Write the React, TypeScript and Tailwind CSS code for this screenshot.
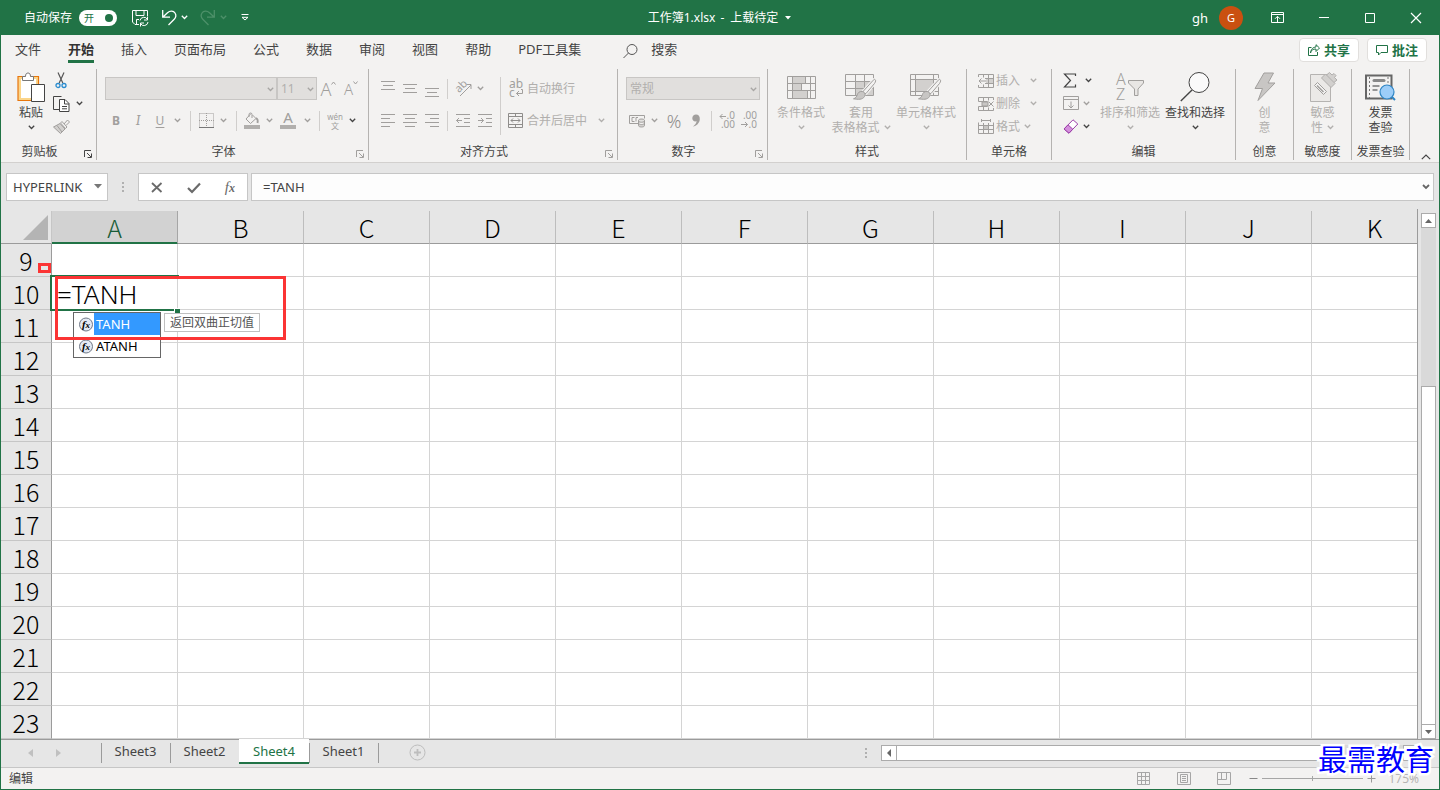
import React from "react";

type IconProps = {
  w: number;
  h: number;
  className?: string;
  children: React.ReactNode;
};

const Icon = ({ w, h, className, children }: IconProps) => (
  <svg
    width={w}
    height={h}
    viewBox={`0 0 ${w} ${h}`}
    fill="none"
    stroke="currentColor"
    className={`shrink-0 overflow-visible ${className ?? ""}`}
    aria-hidden="true"
  >
    {children}
  </svg>
);

const Chevron = ({ className }: { className?: string }) => (
  <Icon w={7} h={5} className={className}>
    <path d="M0.8 0.8 3.5 3.5 6.2 0.8" strokeWidth="1.3" />
  </Icon>
);

const Launcher = ({ className }: { className?: string }) => (
  <button aria-label="更多" className={`absolute right-1 bottom-0.5 ${className}`}>
    <Icon w={8} h={8}>
      <path d="M0.5 7V0.5H7M3 3l4 4M7.5 3.5v4h-4" />
    </Icon>
  </button>
);

const Sep = ({ className }: { className?: string }) => (
  <span className={`h-5 w-px shrink-0 bg-[#d0cecc] ${className}`} />
);

/* ---------- ribbon building blocks ---------- */

type GroupProps = {
  name: string;
  width: string;
  launcher?: string;
  children: React.ReactNode;
};

const Group = ({ name, width, launcher, children }: GroupProps) => (
  <section
    className={`relative flex h-[91px] shrink-0 flex-col border-r border-[#b5b3b1] ${width}`}
  >
    <div className="h-[75px]">{children}</div>
    <h3 className="text-center leading-4 whitespace-nowrap text-[#444]">
      {name}
    </h3>
    {launcher && <Launcher className={launcher} />}
  </section>
);

type BigButtonProps = {
  icon: React.ReactNode;
  lines: string[];
  arrow?: "below" | "inline";
  className?: string;
};

const BigButton = ({ icon, lines, arrow, className }: BigButtonProps) => (
  <button className={`flex flex-col items-center whitespace-nowrap ${className}`}>
    <span className="flex h-9 items-center justify-center">{icon}</span>
    {lines.map((line, i) => (
      <span key={line} className="flex h-[15px] items-center leading-[15px]">
        {line}
        {arrow === "inline" && i === lines.length - 1 && (
          <Chevron className="ml-1" />
        )}
      </span>
    ))}
    {arrow === "below" && (
      <span className="flex h-[15px] items-center">
        <Chevron />
      </span>
    )}
  </button>
);

const Tool = ({
  label,
  className,
  children,
}: {
  label: string;
  className: string;
  children: React.ReactNode;
}) => (
  <button
    aria-label={label}
    className={`flex h-[23px] shrink-0 items-center justify-center ${className}`}
  >
    {children}
  </button>
);

const Lines = ({ d }: { d: string }) => (
  <Icon w={16} h={18}>
    <path d={d} />
  </Icon>
);

const Combo = ({
  label,
  value,
  className,
}: {
  label: string;
  value: string;
  className: string;
}) => (
  <span className={`relative flex h-[23px] ${className}`}>
    <select
      aria-label={label}
      disabled
      className="w-full appearance-none border border-[#c8c6c4] bg-[#e1dfdd] px-[3px] text-[#b1afad] opacity-100"
    >
      <option>{value}</option>
    </select>
    <Chevron className="absolute top-[10px] right-[3px] text-[#a8a6a4]" />
  </span>
);

/* ---------- title bar ---------- */

const TitleBar = () => (
  <header className="flex h-[35px] shrink-0 items-center bg-[#217346] text-white">
    <div className="flex flex-1 items-center pl-6">
      <label htmlFor="autosave">自动保存</label>
      <span className="relative ml-[7px] flex h-4 w-[38px]">
        <input
          id="autosave"
          type="checkbox"
          defaultChecked
          className="h-4 w-[38px] appearance-none rounded-full bg-white"
        />
        <span className="pointer-events-none absolute top-0 left-[5px] text-[10px] leading-4 text-[#217346]">
          开
        </span>
        <span className="pointer-events-none absolute top-1 right-1 h-2 w-2 rounded-full bg-[#217346]" />
      </span>
      <button aria-label="保存" className="ml-[15px]">
        <Icon w={17} h={18}>
          <path d="M7 15.5H3L.5 13V1.500H15.500V7M4 1.500V6.500H12V1.500M4.500 15V10.500H7" />
          <path d="M8 11.500a4 4 0 0 1 7.500-1M15.500 7.500v3.500H12M16 13a4 4 0 0 1-7.500 1.500M8.500 17.500V14H12" />
        </Icon>
      </button>
      <button aria-label="撤消" className="ml-[13px]">
        <Icon w={15} h={17}>
          <path
            d="M0.700 1v7.200H8M1 8 5.500 3.700C8 1.400 11.500 1.500 13 4c1.500 2.400.8 4.600-.8 6.200L6.500 16"
            strokeWidth="1.300"
          />
        </Icon>
      </button>
      <button aria-label="撤消列表" className="ml-[4px]">
        <Chevron />
      </button>
      <button aria-label="恢复" className="ml-3 text-[#4d9069]">
        <Icon w={15} h={17}>
          <path
            d="M14.300 1v7.200H7M14 8 9.500 3.700C7 1.400 3.500 1.500 2 4 .5 6.400 1.200 8.600 2.800 10.200L8.500 16"
            strokeWidth="1.300"
          />
        </Icon>
      </button>
      <button aria-label="恢复列表" className="ml-[5px] text-[#4d9069]">
        <Chevron />
      </button>
      <button aria-label="自定义快速访问工具栏" className="ml-[14px]">
        <Icon w={8} h={7}>
          <path d="M0.500 0.500h7" />
          <path d="M1 3.300h6L4 6z" />
        </Icon>
      </button>
    </div>
    <h1 className="flex items-center gap-[5px]">
      <span>工作簿1.xlsx</span>
      <span>-</span>
      <span className="pl-px">上载待定</span>
      <svg width="6" height="4" className="ml-0.5" aria-hidden="true">
        <path d="M0 0h6L3 3.500z" fill="currentColor" />
      </svg>
    </h1>
    <div className="flex flex-1 items-center justify-end pr-[19px] pl-1.5">
      <span className="text-[13px]">gh</span>
      <span className="ml-[11px] flex h-6 w-6 items-center justify-center rounded-full bg-[#ca5010] text-[11px]">
        G
      </span>
      <button aria-label="功能区显示选项" className="ml-7">
        <Icon w={13} h={11}>
          <path d="M.5.5h12v10H.5zM.5 2.500h12M6.500 10V4.500M4 6.800l2.500-2.500L9 6.800" />
        </Icon>
      </button>
      <button aria-label="最小化" className="ml-[35px]">
        <Icon w={10} h={11}>
          <path d="M0 5.500h10" />
        </Icon>
      </button>
      <button aria-label="最大化" className="ml-9">
        <Icon w={10} h={10}>
          <path d="M.5.5h9v9h-9z" />
        </Icon>
      </button>
      <button aria-label="关闭" className="ml-9">
        <Icon w={10} h={10}>
          <path d="m0 0 10 10M10 0 0 10" strokeWidth="1.200" />
        </Icon>
      </button>
    </div>
  </header>
);

/* ---------- ribbon tabs ---------- */

const tabs = [
  "文件",
  "开始",
  "插入",
  "页面布局",
  "公式",
  "数据",
  "审阅",
  "视图",
  "帮助",
  "PDF工具集",
];

const RibbonTabs = () => (
  <nav className="flex h-8 shrink-0 items-start pr-3 pl-[14px] text-[13px] text-[#444]">
    <div className="flex gap-[27px]">
      {tabs.map((tab) => (
        <button
          key={tab}
          className={
            tab === "开始"
              ? "h-7 border-b-[3px] border-[#217346] pt-0.5 font-bold whitespace-nowrap text-[#333]"
              : "h-7 border-b-[3px] border-transparent pt-0.5 whitespace-nowrap"
          }
        >
          {tab}
        </button>
      ))}
    </div>
    <button className="ml-[42px] flex h-7 items-center gap-[13px]">
      <Icon w={15} h={15} className="mt-1 text-[#555]">
        <circle cx="9" cy="5.500" r="5" />
        <path d="M5.500 9 .5 14" />
      </Icon>
      搜索
    </button>
    <div className="ml-auto flex gap-2 pt-[3px] font-bold text-[#217346]">
      <button className="flex h-6 w-[60px] items-center justify-center gap-1 rounded-sm border border-[#e1dfdd] bg-white">
        <Icon w={12} h={12}>
          <path d="M3.500 3.500h-3v8h9V8M2.500 9C3 6 5 5 8 5V7.500L11.500 4 8 .7V3C5 3.200 3 5 2.500 9z" />
        </Icon>
        共享
      </button>
      <button className="flex h-6 w-[60px] items-center justify-center gap-1 rounded-sm border border-[#e1dfdd] bg-white">
        <Icon w={12} h={12}>
          <path d="M.5 1.500h11v7H5L2.500 11V8.500h-2z" />
        </Icon>
        批注
      </button>
    </div>
  </nav>
);

/* ---------- ribbon groups ---------- */

const ClipboardGroup = () => (
  <Group name="剪贴板" width="w-[96px] pr-[18px]" launcher="text-[#444]">
    <div className="flex pl-4">
      <BigButton
        className="w-[30px] text-[#444]"
        lines={["粘贴"]}
        arrow="below"
        icon={
          <Icon w={28} h={31}>
            <path
              d="M2.500 5.500h18v22h-18z"
              fill="#fff"
              stroke="#fbd58a"
              strokeWidth="3"
            />
            <path d="M14 28.500H1v-24H21.500V12" stroke="#e8760c" strokeWidth="1.200" />
            <path
              d="M5.500 8.500V4.500H8.500C8.500 2 9.500 1 11 1s2.500 1 2.500 3.500h3v4z"
              fill="#fff"
              stroke="#777"
            />
            <path d="M14.500 12.500h13v17h-13z" fill="#fff" stroke="#444" />
          </Icon>
        }
      />
      <div className="ml-[7px]">
        <Tool label="剪切" className="w-[18px]">
          <Icon w={12} h={17}>
            <path d="M3 0.500 7.800 11M9 0.500 4.200 11" stroke="#555" strokeWidth="1.200" />
            <circle cx="3" cy="13.500" r="2" stroke="#2b8ccf" strokeWidth="1.300" />
            <circle cx="9" cy="13.500" r="2" stroke="#2b8ccf" strokeWidth="1.300" />
          </Icon>
        </Tool>
        <div className="flex">
          <Tool label="复制" className="w-[18px] text-[#444]">
            <Icon w={17} h={16}>
              <path d="M6 13.500H.5v-13h8" />
              <path d="M6.500 3.500h5.500l4 4v8H6.500z" fill="#fff" />
              <path d="M11.500 3.500v4.500H16M9 10.500h5M9 12.800h5" />
            </Icon>
          </Tool>
          <Tool label="复制选项" className="w-[18px] text-[#444]">
            <Chevron />
          </Tool>
        </div>
        <Tool label="格式刷" className="w-[18px] text-[#a19f9d]">
          <Icon w={17} h={15}>
            <path d="M.5 8 7 4.500l5 5.500-4.500 4.500z" fill="#d2d0ce" />
            <path d="m4 6.500 5 6.500M7.500 4l1.500-1.500 5 5.500-1.500 1.500zM11 5l3.500-4 2 2L13 6.500" />
          </Icon>
        </Tool>
      </div>
    </div>
  </Group>
);

const FontGroup = () => (
  <Group name="字体" width="w-[272px] pr-[18px]" launcher="text-[#a19f9d]">
    <div className="flex w-[270px] flex-col gap-[9px] pt-2 pl-2 text-[#a19f9d]">
      <div className="flex items-center">
        <Combo label="字体名称" value="" className="w-[172px]" />
        <Combo label="字号" value="11" className="w-[40px]" />
        <Tool label="增大字号" className="w-[23px] text-[18px] font-light">
          A
          <Icon w={5} h={4} className="-mt-3">
            <path d="M.5 3.500 2.500 1l2 2.500" />
          </Icon>
        </Tool>
        <Tool label="减小字号" className="w-[22px] text-[15px] font-light">
          A
          <Icon w={5} h={4} className="-mt-3">
            <path d="M.5.5 2.500 3l2-2.500" />
          </Icon>
        </Tool>
      </div>
      <div className="flex items-center">
        <Tool label="加粗" className="w-[22px] font-bold">B</Tool>
        <Tool label="倾斜" className="w-[22px] font-serif text-[14px] italic">
          I
        </Tool>
        <Tool label="下划线" className="w-[22px] underline underline-offset-2">
          U
        </Tool>
        <Tool label="下划线样式" className="w-3"><Chevron /></Tool>
        <Sep className="mx-[7px]" />
        <Tool label="边框" className="w-4">
          <Icon w={15} h={15}>
            <path d="M.5.500h14v14M.5.500v14M7.500 0v15M0 7.500h15" strokeDasharray="1 1" />
            <path d="M0 14.500h15" stroke="#777" />
          </Icon>
        </Tool>
        <Tool label="边框样式" className="w-[18px]"><Chevron /></Tool>
        <Sep className="mx-1" />
        <Tool label="填充颜色" className="w-[22px]">
          <Icon w={16} h={17}>
            <path d="M7 1.500 2 7l4.500 4.500L12 6.500 8.500 3M5 5V2.500A1.500 1.500 0 0 1 8 2.500V6" />
            <path d="M12 6c2 1 2 3 1.500 5" strokeWidth="1.800" />
            <path d="M0 15h16" stroke="#b1afad" strokeWidth="4" />
          </Icon>
        </Tool>
        <Tool label="填充颜色列表" className="w-3"><Chevron /></Tool>
        <Tool label="字体颜色" className="w-[26px]">
          <Icon w={16} h={17}>
            <text x="8" y="11" textAnchor="middle" fontSize="15" fill="currentColor" stroke="none">
              A
            </text>
            <path d="M0 15h16" stroke="#b1afad" strokeWidth="4" />
          </Icon>
        </Tool>
        <Tool label="字体颜色列表" className="w-3"><Chevron /></Tool>
        <Sep className="mx-[6px]" />
        <Tool label="拼音" className="w-[18px] flex-col text-[8px] leading-[9px]">
          <span>wén</span>
          <span>文</span>
        </Tool>
        <Tool label="拼音选项" className="w-4 text-[#444]"><Chevron /></Tool>
      </div>
    </div>
  </Group>
);

const AlignGroup = () => (
  <Group name="对齐方式" width="w-[249px] pr-[18px]" launcher="text-[#a19f9d]">
    <div className="flex w-[246px] items-start pt-2 pl-2 text-[#a19f9d]">
      <div className="flex flex-col gap-[9px]">
        <div className="flex items-center">
          <Tool label="顶端对齐" className="w-[22px]">
            <Lines d="M1 1.500h14M3 5.500h10M1 9.500h14" />
          </Tool>
          <Tool label="垂直居中" className="w-[22px]">
            <Lines d="M1 4.500h14M3 8.500h10M1 12.500h14" />
          </Tool>
          <Tool label="底端对齐" className="w-[22px]">
            <Lines d="M1 8.500h14M3 12.500h10M1 16.500h14" />
          </Tool>
          <Sep className="mx-1" />
          <Tool label="方向" className="w-[22px]">
            <Icon w={18} h={17}>
              <text
                x="2"
                y="12"
                fontSize="11"
                fill="currentColor"
                stroke="none"
                transform="rotate(-45 5 9)"
              >
                ab
              </text>
              <path d="M6 16 17 5M12.500 4.500h4.500V9" />
            </Icon>
          </Tool>
          <Tool label="方向选项" className="w-3"><Chevron /></Tool>
        </div>
        <div className="flex items-center">
          <Tool label="左对齐" className="w-[22px]">
            <Lines d="M1 2.500h14M1 6.500h9M1 10.500h14M1 14.500h9" />
          </Tool>
          <Tool label="居中" className="w-[22px]">
            <Lines d="M1 2.500h14M3 6.500h10M1 10.500h14M3 14.500h10" />
          </Tool>
          <Tool label="右对齐" className="w-[22px]">
            <Lines d="M1 2.500h14M6 6.500h9M1 10.500h14M6 14.500h9" />
          </Tool>
          <Sep className="mx-1" />
          <Tool label="减少缩进量" className="w-[22px]">
            <Lines d="M1 2.500h14M9 6.500h6M9 10.500h6M1 14.500h14M1.500 8.500H7M4 6 1.500 8.500 4 11" />
          </Tool>
          <Tool label="增加缩进量" className="w-[22px]">
            <Lines d="M1 2.500h14M9 6.500h6M9 10.500h6M1 14.500h14M1 8.500h5.500M4 6l2.500 2.500L4 11" />
          </Tool>
        </div>
      </div>
      <span className="mx-1 h-[58px] w-px bg-[#d0cecc]" />
      <div className="flex flex-col gap-[9px] pl-[3px] text-[#b1afad]">
        <button className="flex h-[23px] items-center gap-[3px]">
          <Icon w={16} h={19} className="text-[#a19f9d]">
            <text x="1" y="9" fontSize="12" fill="currentColor" stroke="none">
              ab
            </text>
            <text x="1" y="18" fontSize="12" fill="currentColor" stroke="none">
              c
            </text>
            <path d="M13 10.500h1.500v4H8.500M11 12l-2.500 2.500L11 17" />
          </Icon>
          自动换行
        </button>
        <button className="flex h-[23px] items-center gap-[3px]">
          <Icon w={16} h={16} className="text-[#8f8d8b]">
            <path d="M.5.5h14v14H.5zM.5 3.500h14M.5 11.500h14M7.500.5v3M7.500 11.500v3" />
            <path d="M3 7.500h9M5 5.500l-2 2 2 2M10 5.500l2 2-2 2" />
          </Icon>
          合并后居中
          <Chevron className="ml-2" />
        </button>
      </div>
    </div>
  </Group>
);

const NumberGroup = () => (
  <Group name="数字" width="w-[150px] pr-[18px]" launcher="text-[#a19f9d]">
    <div className="flex w-[146px] flex-col gap-[9px] pt-2 pl-2 text-[#a19f9d]">
      <Combo label="数字格式" value="常规" className="w-[134px]" />
      <div className="flex items-center">
        <Tool label="会计数字格式" className="w-[22px]">
          <Icon w={17} h={14}>
            <path d="M9 9.500H.5v-8h15v3M5.500 3.500H3v4h2.500M7 7.500v-4h2" />
            <path d="M9.500 6.500c0-2 6-2 6 0v5c0 2-6 2-6 0zM9.500 6.500c0 2 6 2 6 0M9.500 9c0 2 6 2 6 0" fill="#d2d0ce" />
          </Icon>
        </Tool>
        <Tool label="货币列表" className="w-3"><Chevron /></Tool>
        <Tool label="百分比样式" className="w-7 text-[18px] font-light text-[#8f8d8b]">%</Tool>
        <Tool label="千位分隔样式" className="w-4">
          <Icon w={8} h={13}>
            <path
              d="M4 .5C6.500.5 8 2.500 7.800 5.200 7.500 9 4.500 12 1 12.500 3 11 4.500 9 4.600 7.300 2 8 .3 6.300.3 4.200.3 2 2 .5 4 .5z"
              fill="currentColor"
              stroke="none"
            />
          </Icon>
        </Tool>
        <Sep className="mx-[7px]" />
        <Tool label="增加小数位数" className="w-4">
          <Icon w={17} h={17}>
            <text x="16" y="7" textAnchor="end" fontSize="10" fill="currentColor" stroke="none">
              .0
            </text>
            <text x="16" y="16" textAnchor="end" fontSize="10" fill="currentColor" stroke="none">
              .00
            </text>
            <path d="M7 4.500H1M3.500 2 1 4.500 3.500 7" />
          </Icon>
        </Tool>
        <Tool label="减少小数位数" className="ml-1.5 w-4">
          <Icon w={17} h={17}>
            <text x="16" y="7" textAnchor="end" fontSize="10" fill="currentColor" stroke="none">
              .00
            </text>
            <text x="16" y="16" textAnchor="end" fontSize="10" fill="currentColor" stroke="none">
              .0
            </text>
            <path d="M0 12.500h6.500M4 10l2.500 2.500L4 15" />
          </Icon>
        </Tool>
      </div>
    </div>
  </Group>
);

const Brush = () => (
  <>
    <path
      d="M30 6.500c1 .8.800 2-.5 4l-8.500 10c-1 1-3.500-.8-2.800-2.200L28 7.500c.8-1 1.400-1.400 2-1z"
      fill="#f3f2f1"
      stroke="#f3f2f1"
      strokeWidth="3"
    />
    <path
      d="M30 6.500c1 .8.800 2-.5 4l-8.500 10c-1 1-3.500-.8-2.800-2.200L28 7.500c.8-1 1.400-1.400 2-1z"
      fill="#f3f2f1"
    />
    <path
      d="M17 18.500c2.500.2 4 2.500 2.500 5C17.500 27 13 26.500 8.500 25.800c2.500-.8 3-2 3.800-4C13 19.500 14.500 18.300 17 18.500z"
      fill="#c8c6c4"
    />
  </>
);

const StylesGroup = () => (
  <Group name="样式" width="w-[199px]">
    <div className="flex gap-[5px] pl-2 text-[#b1afad]">
      <BigButton
        className="w-[50px]"
        lines={["条件格式"]}
        arrow="below"
        icon={
          <Icon w={29} h={23} className="text-[#a19f9d]">
            <path d="M6 1h13v6H6zM6 8h9v6H6zM6 15h14v7H6z" fill="#d2d0ce" stroke="none" />
            <path d="M.5.5h28v22H.5zM.5 7.500h28M.5 14.500h28M5.500.5v22M18.500.5v7M14.500 7.500v7M20.500 14.500v8M23.500.5v22" />
          </Icon>
        }
      />
      <BigButton
        className="w-[60px]"
        lines={["套用", "表格格式"]}
        arrow="inline"
        icon={
          <Icon w={32} h={28} className="text-[#a19f9d]">
            <path d="M10 9h18v13H10z" fill="#d2d0ce" stroke="none" />
            <path d="M.5 1.500h28v21H.5zM.5 8.500h28M.5 15.500h28M10.500 1.500v21M19.500 1.500v21" />
            <Brush />
          </Icon>
        }
      />
      <BigButton
        className="w-[60px]"
        lines={["单元格样式"]}
        arrow="below"
        icon={
          <Icon w={32} h={28} className="text-[#a19f9d]">
            <path d="M6 7h17v11H6z" fill="#d2d0ce" stroke="none" />
            <path d="M.5 1.500h28v21H.5zM.5 6.500h28M.5 18.500h28M5.500 1.500v21M23.500 1.500v21" />
            <Brush />
          </Icon>
        }
      />
    </div>
  </Group>
);

const CellsGroup = () => (
  <Group name="单元格" width="w-[85px]">
    <div className="flex flex-col pl-[11px] text-[#b1afad]">
      <button className="flex h-[23px] items-center gap-0.5">
        <Icon w={16} h={14} className="text-[#a19f9d]">
          <path d="M8 5h8v4H8z" fill="#d2d0ce" stroke="none" />
          <path d="M.5 3V.5h15v13H.5V11M5.500.5v3M10.500.5v13M5.500 10.500v3M7 4.500h8.500M7 9.500h8.500M1 7h7M3.500 4.500 1 7l2.500 2.500" />
        </Icon>
        插入
        <Chevron className="ml-2" />
      </button>
      <button className="flex h-[23px] items-center gap-0.5">
        <Icon w={16} h={14} className="text-[#a19f9d]">
          <path d="M4 5h6v4H4z" fill="#c8c6c4" />
          <path d="M15.500 3V.5H.5v4h9M15.500 11v2.500H.5v-4h9M5.500.5v4M10.500.5v3M5.500 9.500v4M10.500 10.500v3M10.500 4.500l5 5M15.500 4.500l-5 5" />
        </Icon>
        删除
        <Chevron className="ml-2" />
      </button>
      <button className="flex h-[23px] items-center gap-0.5">
        <Icon w={16} h={15} className="text-[#a19f9d]">
          <path d="M5 7h6v4H5z" fill="#c8c6c4" stroke="none" />
          <path d="M3.500 1.500h9M3.500 0v3M12.500 0v3M.5 3.500v11h15v-11M.5 6.500h15M.5 10.500h15M5.500 4v10M10.500 4v10" />
        </Icon>
        格式
        <Chevron className="ml-0.5" />
      </button>
    </div>
  </Group>
);

const EditGroup = () => (
  <Group name="编辑" width="w-[184px]">
    <div className="flex pl-[11px]">
      <div className="w-[37px]">
        <button aria-label="自动求和" className="flex h-[23px] items-center gap-[7px] text-[#444]">
          <Icon w={15} h={15}>
            <path d="M12.500 3V1H1.500l6 6.500-6 6.500h11v-2.500" strokeWidth="1.200" />
          </Icon>
          <Chevron />
        </button>
        <button aria-label="填充" className="flex h-[23px] items-center gap-1 text-[#a19f9d]">
          <Icon w={16} h={15}>
            <path d="M.5.5h15v13H.5zM.5 3.500h15M8 5.500V12M5.500 9.500 8 12l2.500-2.500" />
          </Icon>
          <Chevron />
        </button>
        <button aria-label="清除" className="flex h-[23px] items-center gap-1 text-[#444]">
          <Icon w={16} h={15}>
            <path d="M10 .8 14.800 5 6 14.200 1 10z" fill="#fff" stroke="#9b3fa8" />
            <path d="M5 5.800 9.800 10.200 6 14.200 1 10z" fill="#d48fdc" stroke="#9b3fa8" />
          </Icon>
          <Chevron />
        </button>
      </div>
      <BigButton
        className="w-[60px] text-[#b1afad]"
        lines={["排序和筛选"]}
        arrow="below"
        icon={
          <Icon w={30} h={28} className="font-light text-[#a19f9d]">
            <text x="1" y="12" fontSize="16" fill="currentColor" stroke="none">
              A
            </text>
            <text x="1" y="27" fontSize="16" fill="currentColor" stroke="none">
              Z
            </text>
            <path d="M13.500 7.500h15v2.500l-5.500 6v6.500h-3.500V16l-6-6z" fill="#e8e6e4" />
          </Icon>
        }
      />
      <BigButton
        className="ml-[5px] w-[60px] text-[#444]"
        lines={["查找和选择"]}
        arrow="below"
        icon={
          <Icon w={30} h={30}>
            <circle cx="19" cy="10.500" r="10" fill="#fafafa" />
            <path d="M12 18 .8 29" strokeWidth="1.400" />
          </Icon>
        }
      />
    </div>
  </Group>
);

const ExtraGroups = () => (
  <>
    <Group name="创意" width="w-[58px]">
      <BigButton
        className="w-full text-[#b1afad]"
        lines={["创", "意"]}
        icon={
          <Icon w={22} h={30}>
            <path
              d="M10 1h9.500l-5.500 10h7L4 28.500l4.500-12H1z"
              fill="#c8c6c4"
              stroke="#a19f9d"
            />
          </Icon>
        }
      />
    </Group>
    <Group name="敏感度" width="w-[58px]">
      <BigButton
        className="w-full text-[#b1afad]"
        lines={["敏感", "性"]}
        arrow="inline"
        icon={
          <Icon w={28} h={31} className="text-[#a19f9d]">
            <path d="M1.500 2.500h20v27h-20z" fill="#ebe9e7" stroke="#b5b3b1" />
            <path
              d="m12.500 6 4-4 9.500 9.500-4 4zM17.500 3l3-2.500 2.500 2.500 2-1.500 2 2-1.500 2L28 8l-3 2.500"
              fill="#d2d0ce"
              stroke="#b1afad"
            />
            <path d="m5.500 13.500 3-3 9 9-3 3z" fill="#f3f2f1" />
            <path d="m8 13.500 6.500 6.500" strokeWidth="1.500" />
          </Icon>
        }
      />
    </Group>
    <Group name="发票查验" width="w-[58px]">
      <BigButton
        className="w-full text-[#444]"
        lines={["发票", "查验"]}
        icon={
          <Icon w={31} h={27}>
            <path d="M1 1.500h25.500v23H1z" stroke="#666" strokeWidth="2" />
            <path d="M4.500 3v21M23 3v10" stroke="#777" strokeDasharray="2 2" />
            <path d="M9 6.500h10" stroke="#888" strokeWidth="3" strokeLinecap="round" />
            <path d="M7.500 12h7M7.500 16h5" stroke="#777" strokeWidth="1.500" />
            <circle cx="22" cy="18" r="7" fill="#9ccdf8" stroke="#2f86c5" strokeWidth="1.200" />
            <path d="m27 23 3 3" stroke="#2f86c5" strokeWidth="2" />
          </Icon>
        }
      />
    </Group>
  </>
);

const Ribbon = () => (
  <div className="flex shrink-0 border-b border-[#d2d0ce] pt-0.5 pb-0.5">
    <ClipboardGroup />
    <FontGroup />
    <AlignGroup />
    <NumberGroup />
    <StylesGroup />
    <CellsGroup />
    <EditGroup />
    <ExtraGroups />
    <button aria-label="折叠功能区" className="mr-2 ml-auto self-end text-[#444]">
      <Icon w={10} h={6}>
        <path d="M.8 5.200 5 1l4.200 4.200" strokeWidth="1.200" />
      </Icon>
    </button>
  </div>
);

/* ---------- formula bar ---------- */

const Dots = () => (
  <span className="flex flex-col gap-0.5">
    <span className="h-0.5 w-0.5 bg-[#b0b0b0]" />
    <span className="h-0.5 w-0.5 bg-[#b0b0b0]" />
    <span className="h-0.5 w-0.5 bg-[#b0b0b0]" />
  </span>
);

const FormulaBar = () => (
  <div className="flex shrink-0 items-center bg-[#e6e6e6] px-[5px] pt-[10px] pb-2 text-[#444]">
    <div className="relative flex h-7 w-[102px]">
      <input
        aria-label="名称框"
        defaultValue="HYPERLINK"
        className="w-full border border-[#c6c6c6] bg-white pl-1.5 text-[13px]"
      />
      <svg width="8" height="5" className="absolute top-[11px] right-[6px]" aria-hidden="true">
        <path d="M0 0h8L4 4.500z" fill="#777" />
      </svg>
    </div>
    <span className="flex w-[30px] justify-center">
      <Dots />
    </span>
    <div className="flex h-7 w-[110px] items-center justify-around border border-[#c6c6c6] bg-white text-[#6a6a6a]">
      <button aria-label="取消">
        <Icon w={12} h={11}>
          <path d="m1 1 9.500 9M10.500 1 1 10" strokeWidth="1.800" />
        </Icon>
      </button>
      <button aria-label="输入">
        <Icon w={14} h={11}>
          <path d="M1 6l4 4 8-8.500" strokeWidth="2.200" />
        </Icon>
      </button>
      <button aria-label="插入函数" className="font-['Liberation_Serif',serif] text-[15px] italic">
        f<span className="text-[12px] font-bold">x</span>
      </button>
    </div>
    <div className="relative ml-[3px] flex h-7 flex-1">
      <input
        aria-label="编辑栏"
        defaultValue="=TANH"
        className="w-full border border-[#c6c6c6] bg-[#fdfdfd] px-[11px] text-[13px]"
      />
      <Icon w={8} h={6} className="absolute top-[11px] right-1 text-[#666]">
        <path d="M1 1l3 3 3-3" strokeWidth="1.800" />
      </Icon>
    </div>
  </div>
);

/* ---------- worksheet ---------- */

const columns = ["A", "B", "C", "D", "E", "F", "G", "H", "I", "J", "K"];
const rows = [9, 10, 11, 12, 13, 14, 15, 16, 17, 18, 19, 20, 21, 22, 23];

const FnIcon = () => (
  <svg width="15" height="15" viewBox="0 0 15 15" aria-hidden="true">
    <circle cx="7" cy="7.500" r="6.500" fill="#e4e9f3" stroke="#707988" />
    <text
      x="7"
      y="11"
      textAnchor="middle"
      fontSize="11"
      className="fill-black font-['Liberation_Serif',serif] font-bold italic"
    >
      f<tspan fontSize="9">x</tspan>
    </text>
  </svg>
);

/* in-place editor with the function list hanging below it */
const CellEditor = () => (
  <div className="absolute inset-0 z-10">
    <div className="absolute -top-0.5 -left-0.5 h-9 w-[129px] border-t-2 border-b-2 border-l-2 border-[#217346]" />
    <div className="absolute top-[31px] left-[122px] h-[5px] w-[6px] border-t border-l border-white bg-[#217346]" />
    <span className="absolute top-0 left-[5px] font-['Noto_Sans',sans-serif] text-[26px] leading-[34px]">
      =TANH
    </span>
    <ul className="absolute top-[35px] left-[21px] w-[88px] border border-[#666] bg-white font-['Noto_Sans',sans-serif] text-[13px] font-normal text-black">
      <li className="flex h-[22px] items-center">
        <span className="flex w-5 justify-end">
          <FnIcon />
        </span>
        <span className="h-[22px] flex-1 bg-[#3399ff] pl-0.5 leading-[22px] text-white">
          TANH
        </span>
      </li>
      <li className="flex h-[22px] items-center">
        <span className="flex w-5 justify-end">
          <FnIcon />
        </span>
        <span className="pl-0.5 leading-[22px]">ATANH</span>
      </li>
    </ul>
    <div className="absolute top-9 left-[112px] h-[19px] border border-[#c0c0c0] bg-white px-[5px] text-[12px] leading-4 font-normal whitespace-nowrap text-[#555]">
      返回双曲正切值
    </div>
    <div className="absolute -top-px left-[3px] h-16 w-[231px] border-[3px] border-[#fb3434]" />
    <div className="absolute -top-[14px] -left-[14px] h-[10px] w-[13px] border-[3px] border-[#fb3434]" />
  </div>
);

const Sheet = () => (
  <table className="w-[1437px] table-fixed border-separate border-spacing-0 font-['Noto_Sans_CJK_SC',sans-serif] text-[25px] font-light text-black">
    <thead>
      <tr className="h-[33px]">
        <th className="w-[51px] border-r border-b border-r-[#c6c6c6] border-b-[#9b9b9b] bg-[#e6e6e6] p-0">
          <svg width="25" height="25" className="mr-[3px] ml-auto" aria-hidden="true">
            <path d="M25 0v25H0z" fill="#b4b4b4" />
          </svg>
        </th>
        {columns.map((col) => (
          <th
            key={col}
            className={
              col === "A"
                ? "w-[126px] border-r border-b border-r-[#a6a6a6] border-b-[#217346] bg-[#d2d2d2] p-0 leading-8 font-light text-[#185c37] shadow-[inset_0_-1px_#217346]"
                : "w-[126px] border-r border-b border-r-[#bdbdbd] border-b-[#9b9b9b] bg-[#e6e6e6] p-0 leading-8 font-light"
            }
          >
            {col}
          </th>
        ))}
      </tr>
    </thead>
    <tbody>
      {rows.map((row) => (
        <tr key={row} className="h-[33px]">
          <th className="border-r border-b border-r-[#9b9b9b] border-b-[#c6c6c6] bg-[#e6e6e6] p-0 leading-8 font-light">
            {row}
          </th>
          {columns.map((col) => (
            <td
              key={col}
              className="relative border-r border-b border-[#d4d4d4] bg-white p-0"
            >
              {row === 10 && col === "A" && <CellEditor />}
            </td>
          ))}
        </tr>
      ))}
    </tbody>
  </table>
);

const VerticalScroll = () => (
  <div className="flex w-[21px] shrink-0 flex-col px-[3px] pt-1">
    <button aria-label="向上滚动" className="flex h-[15px] items-center justify-center border border-[#ababab] bg-white">
      <svg width="7" height="4" aria-hidden="true">
        <path d="M0 4h7L3.500 0z" fill="#666" />
      </svg>
    </button>
    <div className="flex flex-1 flex-col bg-[#d9d9d9]">
      <div className="flex-[159]" />
      <div className="flex-[338] border border-b-0 border-[#ababab] bg-white" />
    </div>
    <button aria-label="向下滚动" className="flex h-[15px] items-center justify-center border border-[#ababab] bg-white">
      <svg width="7" height="4" aria-hidden="true">
        <path d="M0 0h7L3.500 4z" fill="#666" />
      </svg>
    </button>
  </div>
);

/* ---------- sheet tabs and status bar ---------- */

const sheets = ["Sheet3", "Sheet2", "Sheet4", "Sheet1"];

const SheetTabs = () => (
  <div className="flex h-7 shrink-0 items-start border-t border-[#9b9b9b] bg-[#e6e6e6] text-[13px] text-[#444]">
    <div className="flex h-[25px] w-[100px] items-center gap-[23px] pl-[27px] text-[#c0c0c0]">
      <svg width="5" height="8" aria-hidden="true">
        <path d="M5 0v8L0 4z" fill="currentColor" />
      </svg>
      <svg width="5" height="8" aria-hidden="true">
        <path d="M0 0v8l5-4z" fill="currentColor" />
      </svg>
    </div>
    {sheets.map((name) =>
      name === "Sheet4" ? (
        <button
          key={name}
          className="-mt-px h-[25px] w-[70px] border-b-2 border-[#217346] bg-white text-[#217346]"
        >
          {name}
        </button>
      ) : (
        <button
          key={name}
          className="relative -mt-px h-[25px] w-[69px] pb-0.5 before:absolute before:top-1 before:left-0 before:h-5 before:w-px before:bg-[#9b9b9b]"
        >
          {name}
        </button>
      )
    )}
    <span className="mt-[3px] h-5 w-px bg-[#9b9b9b]" />
    <button aria-label="新工作表" className="ml-[30px] h-[25px] text-[#bdbdbd]">
      <Icon w={17} h={17}>
        <circle cx="8.500" cy="8.500" r="7.500" />
        <path d="M8.500 5v7M5 8.500h7" strokeWidth="1.800" />
      </Icon>
    </button>
    <div className="ml-auto flex h-[26px] items-center">
      <Dots />
    </div>
    <div className="mt-[5px] mr-5 ml-[14px] flex h-4 w-[538px]">
      <button aria-label="向左滚动" className="flex w-4 items-center justify-center border border-[#ababab] bg-white">
        <svg width="4" height="8" aria-hidden="true">
          <path d="M4 0v8L0 4z" fill="#666" />
        </svg>
      </button>
      <div className="flex-[430] border border-l-0 border-[#ababab] bg-white" />
      <div className="flex-[77] bg-[#d9d9d9]" />
      <button aria-label="向右滚动" className="flex w-4 items-center justify-center border border-[#ababab] bg-white">
        <svg width="4" height="8" aria-hidden="true">
          <path d="M0 0v8l4-4z" fill="#666" />
        </svg>
      </button>
    </div>
  </div>
);

const StatusBar = () => (
  <footer className="flex h-[22px] shrink-0 items-center border-t border-[#c6c6c6] pr-5 pl-2 text-[#444]">
    <span>编辑</span>
    <div className="ml-auto flex items-center text-[#a6a6a6]">
      <button aria-label="普通">
        <Icon w={13} h={13}>
          <path d="M.5.5h12v12H.5zM.5 4.500h12M.5 8.500h12M4.500.5v12M8.500.5v12" />
        </Icon>
      </button>
      <button aria-label="页面布局" className="ml-[27px]">
        <Icon w={14} h={13}>
          <path d="M.5.5h13v12H.5zM3.500 2.500h7v8h-7zM5 4.500h4M5 6.500h4M5 8.500h4" />
        </Icon>
      </button>
      <button aria-label="分页预览" className="ml-[26px]">
        <Icon w={14} h={13}>
          <path d="M.5.5h13v12H.5zM4.500.5v7M9.500.5v7h-9" />
        </Icon>
      </button>
      <button aria-label="缩小" className="ml-[18px]">
        <Icon w={9} h={9}>
          <path d="M.5 4.500h8" stroke="#888" />
        </Icon>
      </button>
      <input
        type="range"
        aria-label="显示比例"
        className="mx-1 h-2 w-[101px] appearance-none bg-transparent bg-[linear-gradient(#a6a6a6,#a6a6a6)] bg-[length:100%_1px] bg-center bg-no-repeat [&::-webkit-slider-thumb]:h-[5px] [&::-webkit-slider-thumb]:w-px [&::-webkit-slider-thumb]:appearance-none [&::-webkit-slider-thumb]:bg-[#a6a6a6]"
      />
      <button aria-label="放大">
        <Icon w={9} h={9}>
          <path d="M.5 4.500h8M4.500.5v8" stroke="#999" />
        </Icon>
      </button>
      <span className="ml-3 text-[#b5b3b1]">175%</span>
    </div>
  </footer>
);

export default function App() {
  return (
    <div className="relative flex h-screen flex-col overflow-hidden bg-[#f3f2f1] font-['Noto_Sans','Noto_Sans_CJK_SC',sans-serif] text-[12px] leading-4">
      <TitleBar />
      <div className="flex min-h-0 flex-1 flex-col border-r border-b border-l border-[#217346]">
        <RibbonTabs />
        <Ribbon />
        <FormulaBar />
        <main className="flex min-h-0 flex-1 bg-[#e6e6e6]">
          <div className="min-w-0 flex-1 overflow-hidden border-r border-[#9b9b9b] pt-0.5">
            <Sheet />
          </div>
          <VerticalScroll />
        </main>
        <SheetTabs />
        <StatusBar />
      </div>
      <div className="absolute right-1.5 bottom-3.5 font-['Noto_Sans_CJK_SC',sans-serif] text-[29px] leading-9 text-[#0000ff] [-webkit-text-stroke:5px_white] [paint-order:stroke_fill]">
        最需教育
      </div>
    </div>
  );
}
